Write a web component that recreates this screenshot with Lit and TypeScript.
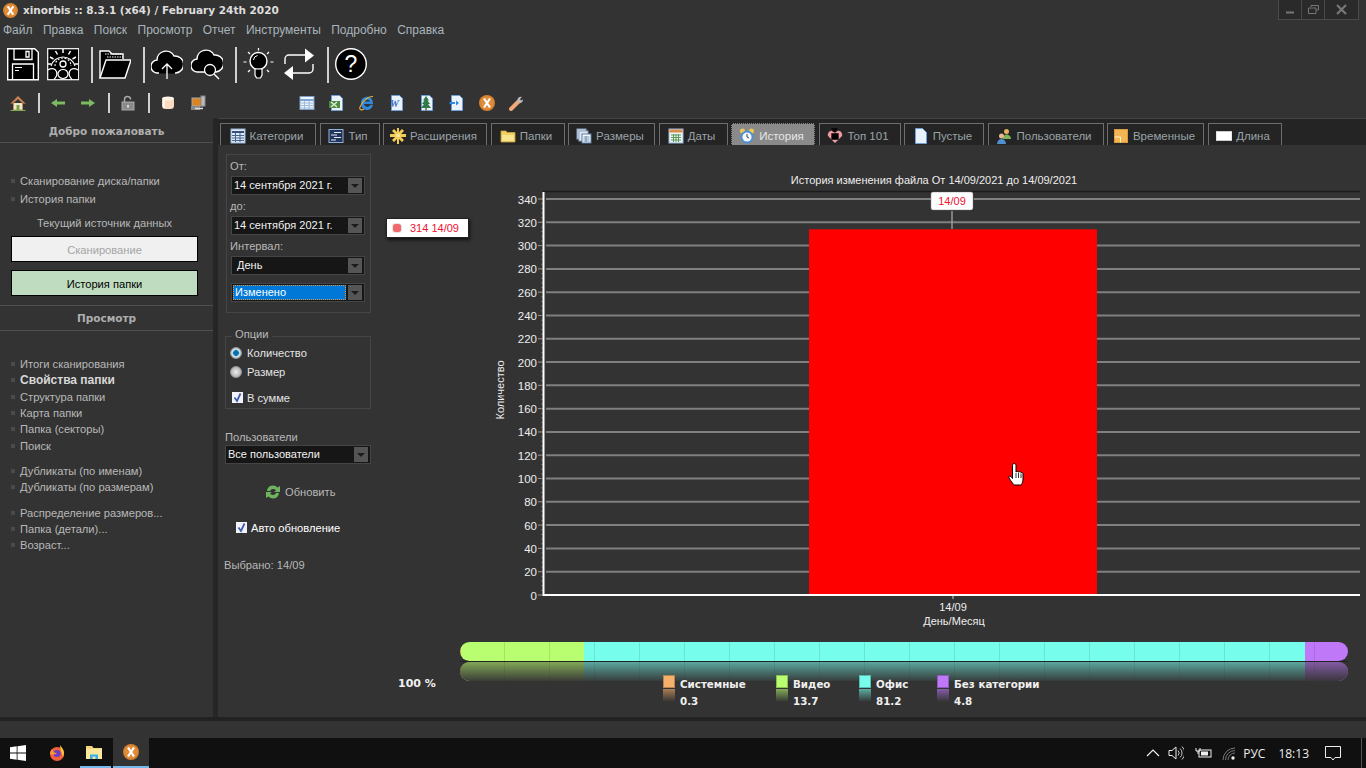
import { LitElement, html, css, svg } from "lit";
import { customElement } from "lit/decorators.js";

const xLogo = (s: number) => html`<svg class="ic" width=${s} height=${s} viewBox="0 0 16 16">
  <circle cx="8" cy="8" r="8" fill="#d4812f"/><circle cx="8" cy="8" r="6.4" fill="#e08c38"/>
  <path d="M5 3.5 11 12.5M11 3.5 5 12.5" stroke="#fff" stroke-width="2.2" fill="none"/></svg>`;

const big = (inner: unknown, w = 32) => html`<svg class="big" width=${w} height="34" viewBox="0 0 32 34">${inner}</svg>`;
const bigIcons = {
  save: big(svg`<path d="M.7 1.7h27l3.6 3.6v27.4H.7z" fill="#000" stroke="#fff" stroke-width="1.4"/>
    <path d="M7 2v10.5h18V2M19 4.5h3v5.5h-3zM5.5 32V17h21v15" fill="none" stroke="#fff" stroke-width="1.3"/>
    <path d="M8 20.5h7M8 23.5h4" stroke="#fff" stroke-width="1.2"/>`),
  gear: big(svg`<rect x=".7" y="1.7" width="31" height="31" fill="#000" stroke="#fff" stroke-width="1.2"/>
    <path d="M4 19A12.500 12.500 0 0 1 28 19" fill="none" stroke="#fff" stroke-width="1.100"/>
    <path d="M16 2v4M8.500 4l2 3.500M23.500 4l-2 3.500M3 10l3.500 2M29 10l-3.500 2M1 17h3.500M31 17h-3.500" stroke="#fff" stroke-width="1.500"/>
    <path d="M8 19a8 8 0 0 1 16 0" fill="none" stroke="#fff" stroke-width="1.100" stroke-dasharray="2 1.500"/>
    <circle cx="16" cy="17" r="3" fill="none" stroke="#fff" stroke-width="1.300"/>
    <path d="M1 23c3-2 7-2 8.500 1.500 1 3-.5 6-2.500 8M31 23c-3-2-7-2-8.500 1.500-1 3 .5 6 2.500 8M11 27a5 4.500 0 0 1 10 0 5 4.500 0 0 1-10 0" fill="none" stroke="#fff" stroke-width="1.200"/>`),
  folder: big(svg`<path d="M1 31V4h9l3 3h11v5" fill="#000" stroke="#fff" stroke-width="1.4"/>
    <path d="M6 7h17M8 10h16" stroke="#fff" stroke-dasharray="1.5 1" fill="none"/>
    <path d="M1 31 7 13h25l-6 18z" fill="#000" stroke="#fff" stroke-width="1.4"/>`),
  up: big(svg`<path d="M8 26H7a6.5 6.5 0 0 1-1-13 9 9 0 0 1 17-4 8.500 8.500 0 0 1 2 17h-1" fill="#000" stroke="#fff" stroke-width="1.4"/>
    <path d="M8 26h16" stroke="#000"/><path d="M16 32V17M11 22l5-5 5 5" fill="none" stroke="#fff" stroke-width="1.3"/>`),
  search: big(svg`<path d="M14 25H7a6.500 6.500 0 0 1-1-13 9 9 0 0 1 17-4 8.500 8.500 0 0 1 2 17h-1" fill="#000" stroke="#fff" stroke-width="1.4"/>
    <circle cx="19" cy="23" r="5.500" fill="#000" stroke="#fff" stroke-width="1.3"/><path d="M23 27l5 5" stroke="#fff" stroke-width="1.4"/>`),
  bulb: big(svg`<circle cx="15.500" cy="14" r="8.500" fill="#000" stroke="#fff" stroke-width="1.4"/>
    <path d="M12 22h7v6l-1.500 3h-4L12 28z" fill="#000" stroke="#fff" stroke-width="1.2"/>
    <path d="M10.500 13a5 5 0 0 1 4-4.500" fill="none" stroke="#fff"/>
    <path d="M15.500 1v2.500M5 5l2 2M26 5l-2 2M.5 15h3M27.500 15h3M5 25l2-2M26 25l-2-2" stroke="#fff" stroke-width="1.2"/>`),
  arrows: big(svg`<path d="M2 17v-5a4 4 0 0 1 4-4h20" fill="none" stroke="#fff" stroke-width="1.4"/><path d="M22 1.500l9 7-9 7z" fill="#fff"/>
    <path d="M30 17v5a4 4 0 0 1-4 4H6" fill="none" stroke="#fff" stroke-width="1.4"/><path d="M10 19l-9 7 9 7z" fill="#fff"/>`),
  help: big(svg`<circle cx="16" cy="17" r="15.300" fill="#000" stroke="#fff" stroke-width="1.4"/>
    <text x="16" y="25" text-anchor="middle" fill="#fff" font-family="Liberation Sans" font-size="23">?</text>`),
};

const sm = (inner: unknown, cls = "") => html`<svg class="ic ${cls}" width="16" height="16" viewBox="0 0 16 16">${inner}</svg>`;
const doc = svg`<path d="M2.500 .5h8l3 3v12h-11z" fill="#eaf3fc" stroke="#6f9fd8"/>`;
const gridSheet = svg`<rect x="1" y="1.500" width="14" height="13" fill="#eef5fb" stroke="#7c9ec8"/><path d="M1 5h14" stroke="#7ca6d6" stroke-width="2"/><path d="M2 8h12M2 10.500h12M2 13h12M5.500 6v8M10 6v8" stroke="#9cb9da"/>`;
const smIcons = {
  home: sm(svg`<path d="M3.500 8v7h9V8" fill="#f4e6c8" stroke="#b8986a"/><path d="M8 1 .5 8.500h2.500L8 4l5 4.500h2.500z" fill="#c9855a" stroke="#96603a" stroke-width=".6"/><rect x="6.500" y="10" width="3" height="5" fill="#7aa04c"/><path d="M.5 15.500h15" stroke="#7fae4e"/>`),
  left: sm(svg`<path d="M1 8l6-4v2.500h8v3H7V12z" fill="#7dbb62"/>`),
  right: sm(svg`<path d="M15 8l-6-4v2.500H1v3h8V12z" fill="#7dbb62"/>`),
  lock: sm(svg`<path d="M4.500 7V4.500a3 3 0 0 1 6 0" fill="none" stroke="#a8a8a8" stroke-width="1.500"/><rect x="2" y="7" width="12" height="8" fill="#8a8a8a" stroke="#aaa"/><rect x="7" y="10" width="2" height="2.500" fill="#ddd"/>`),
  cyl: sm(svg`<rect x="2" y="2" width="12" height="12" rx="3.500" fill="#fbdcc0"/><ellipse cx="8" cy="3.500" rx="6" ry="2" fill="#fff4e6"/><rect x="3" y="5" width="2" height="8" fill="#fff" opacity=".7"/>`),
  net: sm(svg`<rect x="2" y="3" width="11" height="8" fill="#dc8420" stroke="#aaa"/><rect x="11" y="1" width="4" height="10" fill="#bbb" stroke="#888"/><rect x="1" y="11" width="9" height="4" fill="#888"/><path d="M5 13.500h8" stroke="#ddd" stroke-width="1.500"/>`),
  sheet: sm(gridSheet),
  xls: sm(svg`${doc}<path d="M0 6h11v7H0z" fill="#4d8a3e"/><path d="M2 7l6 5M8 7l-6 5" stroke="#dff0d8" stroke-width="1.400"/>`),
  ie: sm(svg`<path d="M2 8a6 6 0 0 1 11.500-2.500L14 9H5a3.400 3.400 0 0 0 6.500.8h2.500A6 6 0 0 1 2 8z" fill="#2d8ae0"/><path d="M5 6.500a3.300 3.300 0 0 1 6 0z" fill="#333"/><path d="M14 1.500C11 1 4 4.500 1 12c-1 3 1.500 3.500 4 2" fill="none" stroke="#e4b13c" stroke-width="1.100"/>`),
  word: sm(svg`${doc}<text x="1" y="12" font-family="Liberation Serif" font-style="italic" font-weight="700" font-size="10" fill="#3a6fc4">W</text>`),
  tree: sm(svg`${doc}<path d="M7 1 10 5.500H8.500L11 9H9l3 4H2l3-4H3l2.500-3.500H4z" fill="#2f7a47"/><rect x="6.300" y="13" width="1.500" height="2.500" fill="#7a5a30"/>`),
  adoc: sm(svg`${doc}<path d="M0 8l3-2.500V7h3v2H3v1.500z" fill="#2d8ae0"/><path d="M10 8 7 5.500v5z" fill="#2d8ae0"/>`),
  x: xLogo(16),
  wrench: sm(svg`<path d="M2 14 9 7" stroke="#f0a878" stroke-width="4" stroke-linecap="round"/><path d="M8.500 6.500A3.500 3.500 0 0 1 13 2l-2 2 1 1.500 2-1A3.500 3.500 0 0 1 9.500 8z" fill="#b9b9b9"/>`),
  tCat: sm(svg`<rect x="1" y="1" width="14" height="14" fill="#dfe9f5" stroke="#9bb6d8"/><path d="M2 4h12" stroke="#36537e" stroke-width="2"/><path d="M2 7.500h12M2 10h12M2 12.500h12M5.500 5v9M10 5v9" stroke="#45658f"/>`),
  tType: sm(svg`<rect x="1" y="1.500" width="14" height="13" fill="#23365a" stroke="#8fb0dc"/><path d="M6 4.500h7M3 7h6M6 9.500h7M3 12h5" stroke="#e8eef8" stroke-width="1.200"/>`),
  tStar: sm(svg`<path d="M7 0h2v4l3-3 2 2-3 3h5v3h-5l3 3-2 2-3-3v5H7v-5l-3 3-2-2 3-3H0V6h5L2 3l2-2 3 3z" fill="#f2cc55"/><path d="M6 6h4v3H6z" fill="#f8e69a"/>`),
  tFolder: sm(svg`<path d="M1 3h5l1 1.500h8V14H1z" fill="#f0d060" stroke="#c6a548" stroke-width=".8"/><rect x="2" y="7" width="12" height="6" fill="#f8e68e"/>`),
  tSize: sm(svg`<rect x="1" y="1" width="9" height="10" fill="#cdd8e6" stroke="#8ea4c0"/><rect x="3" y="3" width="9" height="10" fill="#dfe7f1" stroke="#8ea4c0"/><rect x="6" y="6" width="9" height="9" fill="#f4f8fc" stroke="#597ba6"/><path d="M7.500 9h6M7.500 11h6M7.500 13h6M10 8v6" stroke="#5e7ea6" stroke-width=".8"/>`),
  tDate: sm(svg`<rect x="1" y="1" width="14" height="14" fill="#eef3f8" stroke="#9bb6d8"/><rect x="1.500" y="1.500" width="13" height="3" fill="#d98c4a"/><path d="M3 7h10M3 9.500h10M3 12h10M5.500 6v8M8 6v8M10.500 6v8" stroke="#5c9a5a"/>`),
  tClock: sm(svg`<circle cx="3.500" cy="3" r="2.500" fill="#f0c850"/><circle cx="12.500" cy="3" r="2.500" fill="#f0c850"/><circle cx="8" cy="9" r="6.500" fill="#4b90d6"/><circle cx="8" cy="9" r="4.600" fill="#f4f8fc"/><path d="M8 6v3l2 1" stroke="#345" fill="none"/>`),
  tTop: sm(svg`<path d="M8 15 1.500 8.500a3.500 3.500 0 0 1 0-4A3.500 3.500 0 0 1 8 5.500 3.500 3.500 0 0 1 14.500 4.500a3.500 3.500 0 0 1 0 4z" fill="#f09aa2"/><path d="M4.500 1h6M5.500 3h4M5 6h6v5H5z" stroke="#000" stroke-width="1.300" fill="#000"/>`),
  tPage: sm(svg`<path d="M2.500 .5h7l4 4v11h-11z" fill="#e8f2fc" stroke="#6f9fd8"/>`),
  tUsers: sm(svg`<circle cx="10.500" cy="3.500" r="2.500" fill="#e8b060"/><path d="M7 11c0-3 1.500-4.500 3.500-4.500S15 8 15 11z" fill="#7cb45a"/><circle cx="5.500" cy="8" r="2.500" fill="#e8b890"/><path d="M1 16c0-3 2-5 4.500-5S10 13 10 16z" fill="#4f8fd0"/>`),
  tTemp: sm(svg`<rect x="1.500" y="1.500" width="13" height="13" fill="#f2b654" stroke="#d89a3a"/><path d="M1.500 9h6v5.500" fill="none" stroke="#fff3cc"/>`),
  tLen: sm(svg`<rect x="0" y="3.500" width="16" height="9" fill="#fff" stroke="#ccc"/>`),
  refresh: sm(svg`<path d="M2 7A6 6 0 0 1 12.500 3.500L15 2v6h-6l2-1.500A3.500 3.500 0 0 0 5 7z" fill="#6eb45e"/><path d="M14 9A6 6 0 0 1 3.500 12.500L1 14V8h6L5 9.500A3.500 3.500 0 0 0 11 9z" fill="#6eb45e"/>`),
};

const TABS = [
  ["Категории", 96, "tCat"], ["Тип", 60, "tType"], ["Расширения", 104, "tStar"], ["Папки", 74, "tFolder"],
  ["Размеры", 87, "tSize"], ["Даты", 69, "tDate"], ["История", 84, "tClock"], ["Топ 101", 82, "tTop"],
  ["Пустые", 80, "tPage"], ["Пользователи", 116, "tUsers"], ["Временные", 97, "tTemp"], ["Длина", 74, "tLen"],
] as [string, number, keyof typeof smIcons][];

const SEGMENTS = [["#f5b06c", 0.1], ["#b9fd71", 13.9], ["#76fdec", 81.2], ["#be78f8", 4.8]] as [string, number][];
const LEGEND = [["Системные", "0.3", "#f5b06c", 113], ["Видео", "13.7", "#b9fd71", 83], ["Офис", "81.2", "#76fdec", 78], ["Без категории", "4.8", "#be78f8", 120]] as [string, string, string, number][];

const yAt = (v: number) => 595 - v * 1.1647;

@customElement("x-combo")
class XCombo extends LitElement {
  static properties = { label: {}, kind: {} };
  label = "";
  kind = "";
  static styles = css`
    :host { display: block; }
    .c { display: flex; align-items: center; height: 19px; box-sizing: border-box; background: #161616; border: 1px solid #454545; padding: 1px; color: #f2f2f2; font: 11px "Liberation Sans", sans-serif; }
    .t { flex: 1; height: 15px; line-height: 15px; padding-left: 1px; white-space: nowrap; }
    .pad .t { padding-left: 4px; }
    .sel .t { background: #0078d7; color: #fff; padding-left: 2px; margin-right: 2px; outline: 1px dotted #e8963c; outline-offset: -1px; }
    .b { width: 14px; height: 15px; background: #555; display: flex; align-items: center; justify-content: center; margin-right: 1px; }
    .a { width: 0; height: 0; border-left: 4px solid transparent; border-right: 4px solid transparent; border-top: 4px solid #1c1c1c; }
  `;
  render() {
    return html`<div class="c ${this.kind}"><div class="t">${this.label}</div><div class="b"><div class="a"></div></div></div>`;
  }
}

@customElement("app-root")
export class AppRoot extends LitElement {
  static styles = css`
    :host { display: block; width: 1366px; height: 768px; overflow: hidden; background: #333; color: #b8b8b8; font: 11.150px "Liberation Sans", sans-serif; }
    svg { display: block; flex: none; }
    .root { display: flex; flex-direction: column; height: 768px; }
    .title { height: 20px; display: flex; align-items: center; padding-left: 3px; gap: 5px; color: #ddd; font: bold 10.500px "DejaVu Sans", sans-serif; flex: none; }
    .winbtns { margin-left: auto; margin-right: 7px; display: flex; height: 19px; align-self: flex-start; border: 1px solid #4a4a4a; border-top: 0; background: #2a2a2a; }
    .winbtns div { width: 22px; display: flex; align-items: center; justify-content: center; border-left: 1px solid #4a4a4a; }
    .winbtns div:first-child { border-left: 0; }
    .winbtns div:last-child { width: 33px; }
    .menu { height: 20px; display: flex; align-items: center; padding-left: 3px; color: #a9b5bb; flex: none; font-size: 12px; }
    .menu span { margin-right: 10.400px; }
    .bigbar { height: 44px; padding: 4px 0 0 7px; box-sizing: border-box; display: flex; align-items: flex-start; flex: none; margin-top: 3px; }
    .big { margin-right: 8px; }
    .bsep { width: 2px; height: 36px; background: #d0d0d0; margin: 0 6px 0 4px; }
    .smallbar { height: 22px; display: flex; align-items: center; padding-left: 10px; flex: none; margin-top: 5px; }
    .ssep { width: 2px; height: 20px; background: #d0d0d0; margin: 0 10px 0 12px; }
    .g14 { margin-left: 14px; }
    .spacer { width: 93px; }
    .main { flex: 1; min-height: 0; display: flex; margin-top: 4px; border-bottom: 4px solid #222; }
    .side { width: 213px; flex: none; border-right: 5px solid #262626; }
    .sh { height: 24px; border-bottom: 1px solid #4f4f4f; text-align: center; color: #aeaeae; font: bold 10.500px/26px "DejaVu Sans", sans-serif; }
    .sh.second { border-top: 1px solid #4f4f4f; line-height: 25px; }
    .items { margin-top: 29px; }
    .items.second { margin-top: 25px; }
    .it { height: 18px; display: flex; align-items: center; padding-left: 11px; gap: 5px; white-space: nowrap; }
    .second .it { height: 16.300px; }
    .it::before { content: ""; width: 4px; height: 4px; background: #4a4a4a; }
    .it.strong { font-weight: 700; font-size: 12px; color: #d8d8d8; }
    .it.mt { margin-top: 9px; }
    .src { text-align: center; width: 209px; line-height: 16px; margin-top: 7px; }
    .btn { width: 187px; height: 26px; box-sizing: border-box; border: 1px solid #000; margin-left: 11px; display: flex; align-items: center; justify-content: center; padding-top: 1px; }
    .btn.off { background: #f0f0f0; color: #a5a5a5; margin-top: 5px; }
    .btn.on { background: #c0dcc0; color: #000; margin: 8px 0 9px 11px; }
    .content { flex: 1; min-width: 0; display: flex; flex-direction: column; }
    .tabs { height: 27px; box-sizing: border-box; background: #242424; border-top: 1px solid #454545; padding: 4px 0 0 2px; display: flex; gap: 3.500px; flex: none; }
    .tab { height: 22px; box-sizing: border-box; border: 1px solid #6e6e6e; border-bottom: 0; display: flex; align-items: center; justify-content: center; gap: 4px; color: #9aa3a8; white-space: nowrap; font-size: 11.500px; padding: 2px 3px 0 0; }
    .tab.active { background: #8a8a8a; color: #e6e6e6; border: 1px dotted #222; border-bottom: 0; }
    .body { flex: 1; min-height: 0; display: flex; }
    .form { width: 168px; flex: none; box-sizing: border-box; padding: 9px 0 0 8px; }
    .box { width: 145px; height: 159px; box-sizing: border-box; border: 1px solid #454545; padding: 4px 0 0 4px; }
    .box x-combo { width: 134px; margin-top: 3px; }
    .box x-combo.c4 { margin-top: 8px; }
    .lb { height: 14px; line-height: 14px; margin-top: 4px; margin-left: -1px; }
    .lb.first { margin-top: 0; }
    fieldset { width: 146px; height: 80px; box-sizing: border-box; margin: 16px 0 0 -1px; padding: 0 4px; border: 1px solid #454545; min-width: 0; }
    legend { margin-left: 2px; padding: 0 3px; line-height: 10px; height: 14px; }
    .opt { height: 19px; display: flex; align-items: center; gap: 5px; color: #e4e4e4; }
    .opt.ck { margin-top: 7px; padding-left: 2px; gap: 4px; }
    .radio { width: 12px; height: 12px; border-radius: 50%; box-sizing: border-box; border: 1px solid #999; background: radial-gradient(circle, #eee, #9c9c9c); flex: none; }
    .radio.on { background: radial-gradient(circle, #0a6fae 0 2.500px, #7fc0e6 3px, #dfe8ee 4px, #8a8a8a 6px); }
    .check { width: 11px; height: 11px; background: #f2f2f8; flex: none; }
    .ulabel { margin: 21px 0 1px -1px; height: 14px; line-height: 14px; }
    .ucombo { width: 146px; margin-left: -1px; }
    .refresh { margin: 20px 0 0 39px; height: 16px; display: flex; align-items: center; gap: 4px; }
    .auto { margin: 21px 0 0 10px; height: 13px; display: flex; align-items: center; gap: 4px; color: #fff; }
    .picked { margin: 24px 0 0 -2px; line-height: 14px; }
    .right { flex: 1; min-width: 0; position: relative; }
    .tip { position: absolute; left: 0; top: 73px; width: 83px; height: 20px; box-sizing: border-box; background: #fff; border: 1px solid #222; box-shadow: 1px 2px 3px #111; display: flex; align-items: center; color: #f01030; padding-left: 6px; gap: 9px; font-size: 11px; }
    .tip i { width: 8px; height: 8px; border-radius: 2.500px; background: #f0686c; box-shadow: 0 0 0 1px #e6e6e6; }
    .stack { margin: 7px 0 0 74px; width: 888px; position: relative; }
    .bar { height: 19px; display: flex; border-radius: 10px; overflow: hidden; position: relative; }
    .bar div { height: 100%; }
    .lines { position: absolute; inset: 0; background: repeating-linear-gradient(90deg, transparent 0 44px, rgba(0,0,0,.1) 44px 45px); }
    .bline { height: 1px; background: #222; }
    .refl { height: 19px; display: flex; border-radius: 10px; overflow: hidden; position: relative; }
    .refl div { height: 100%; }
    .fade { position: absolute; inset: 0; background: linear-gradient(rgba(51,51,51,.42), rgba(51,51,51,.95)); }
    .legend { display: flex; margin: -5px 0 0 12px; position: relative; height: 36px; color: #f0f0f0; font: bold 10.300px "DejaVu Sans", sans-serif; }
    .pct { width: 265px; line-height: 16px; font-size: 11px; }
    .li { display: flex; gap: 5px; }
    .sw { width: 12px; margin-top: -1px; }
    .sw b { display: block; height: 13px; box-sizing: border-box; border: 1px solid rgba(0,0,0,.25); }
    .sw u { display: block; height: 13px; margin-top: 1px; opacity: .6; mask-image: linear-gradient(#000, transparent); }
    .li p { margin: 0; line-height: 16px; white-space: nowrap; }
    .li p + p { margin-top: 1px; }
    .status { height: 17px; flex: none; }
    .task { height: 30px; flex: none; background: #101010; display: flex; align-items: center; color: #eee; position: relative; }
    .tb { height: 30px; display: flex; align-items: center; justify-content: center; box-sizing: border-box; flex: none; }
    .tb.win { width: 36px; }
    .tb.fox { width: 41px; }
    .tb.dir { width: 31px; border-bottom: 2px solid #76b9ed; margin-left: 3px; padding-right: 3px; }
    .tb.xin { width: 36px; background: #333; border-bottom: 2px solid #76b9ed; margin-left: 2px; }
    .tray { margin-left: auto; display: flex; align-items: center; height: 30px; font: 12px "Open Sans", "Liberation Sans", sans-serif; }
    .caret { margin-right: 8px; }
    .spk { margin-right: 11px; }
    .bat { margin-right: 10px; }
    .tray .lang { margin: 0 13px 0 7px; }
    .tray .time { margin-right: 16px; }
    .endline { width: 1px; height: 30px; background: #555; margin: 0 4px 0 20px; }
  `;

  render() {
    const menu = ["Файл", "Правка", "Поиск", "Просмотр", "Отчет", "Инструменты", "Подробно", "Справка"];
    const ticks = Array.from({ length: 18 }, (_, i) => i * 20);
    const minor = Array.from({ length: 86 }, (_, i) => i * 4);
    return html`<div class="root">
      <div class="title">${xLogo(15)}<span>xinorbis :: 8.3.1 (x64) / February 24th 2020</span>
        <div class="winbtns">
          <div><svg width="8" height="8" viewBox="0 0 8 8"><path d="M0 6.500h8" stroke="#777" stroke-width="2"/></svg></div>
          <div><svg width="11" height="9" viewBox="0 0 11 9"><path d="M3 2V.5h7.500v4.500H8.500M.5 3h7.500v5.500H.5z" fill="none" stroke="#777"/></svg></div>
          <div><svg width="11" height="11" viewBox="0 0 11 11"><path d="M1 1l9 9M10 1l-9 9" stroke="#777" stroke-width="2.200"/></svg></div>
        </div>
      </div>
      <div class="menu">${menu.map((m) => html`<span>${m}</span>`)}</div>
      <div class="bigbar">
        ${bigIcons.save}${bigIcons.gear}<div class="bsep"></div>${bigIcons.folder}<div class="bsep"></div>
        ${bigIcons.up}${bigIcons.search}<div class="bsep"></div>${bigIcons.bulb}${bigIcons.arrows}<div class="bsep"></div>${bigIcons.help}
      </div>
      <div class="smallbar">
        ${smIcons.home}<div class="ssep"></div>${smIcons.left}<span class="g14"></span>${smIcons.right}<div class="ssep"></div>${smIcons.lock}<div class="ssep"></div>${smIcons.cyl}<span class="g14"></span>${smIcons.net}
        <span class="spacer"></span>
        ${[smIcons.sheet, smIcons.xls, smIcons.ie, smIcons.word, smIcons.tree, smIcons.adoc, smIcons.x, smIcons.wrench].map((ic, i) => html`${i ? html`<span class="g14"></span>` : ""}${ic}`)}
      </div>
      <div class="main">
        <div class="side">
          <div class="sh">Добро пожаловать</div>
          <div class="items"><div class="it">Сканирование диска/папки</div><div class="it">История папки</div></div>
          <div class="src">Текущий источник данных</div>
          <div class="btn off">Сканирование</div>
          <div class="btn on">История папки</div>
          <div class="sh second">Просмотр</div>
          <div class="items second">
            <div class="it">Итоги сканирования</div><div class="it strong">Свойства папки</div><div class="it">Структура папки</div>
            <div class="it">Карта папки</div><div class="it">Папка (секторы)</div><div class="it">Поиск</div>
            <div class="it mt">Дубликаты (по именам)</div><div class="it">Дубликаты (по размерам)</div>
            <div class="it mt">Распределение размеров...</div><div class="it">Папка (детали)...</div><div class="it">Возраст...</div>
          </div>
        </div>
        <div class="content">
          <div class="tabs">
            ${TABS.map(([t, w, ic]) => html`<div class="tab ${t === "История" ? "active" : ""}" style="width:${w}px">${smIcons[ic]}<span>${t}</span></div>`)}
          </div>
          <div class="body">
            <div class="form">
              <div class="box">
                <div class="lb first">От:</div><x-combo label="14 сентября 2021 г."></x-combo>
                <div class="lb">до:</div><x-combo label="14 сентября 2021 г."></x-combo>
                <div class="lb">Интервал:</div><x-combo label="День" kind="pad"></x-combo>
                <x-combo class="c4" label="Изменено" kind="sel"></x-combo>
              </div>
              <fieldset><legend>Опции</legend>
                <div class="opt"><span class="radio on"></span>Количество</div>
                <div class="opt"><span class="radio"></span>Размер</div>
                <div class="opt ck"><span class="check"><svg width="11" height="11" viewBox="0 0 11 11"><path d="M2.500 5.500 5 9l3.500-7.500" fill="none" stroke="#3f5fae" stroke-width="1.800"/></svg></span>В сумме</div>
              </fieldset>
              <div class="ulabel">Пользователи</div>
              <x-combo class="ucombo" label="Все пользователи"></x-combo>
              <div class="refresh">${smIcons.refresh}<span>Обновить</span></div>
              <div class="auto"><span class="check"><svg width="11" height="11" viewBox="0 0 11 11"><path d="M2.500 5.500 5 9l3.500-7.500" fill="none" stroke="#3f5fae" stroke-width="1.800"/></svg></span>Авто обновление</div>
              <div class="picked">Выбрано: 14/09</div>
            </div>
            <div class="right">
              <svg width="980" height="490" viewBox="386 145 980 490" font-family="Liberation Sans" font-size="11">
                <text x="934" y="184" text-anchor="middle" fill="#eee">История изменения файла От 14/09/2021 до 14/09/2021</text>
                <path d="M543 191.500H1360" stroke="#1c1c1c" stroke-width="1.500"/>
                ${ticks.map((v) => svg`<path d="M546 ${yAt(v)}H1360" stroke="#808080" stroke-width="2"/>
                  <path d="M538 ${yAt(v)}H543" stroke="#999"/>
                  <text x="537" y="${yAt(v) + 4.5}" text-anchor="end" fill="#eee" font-size="11.500">${v}</text>`)}
                ${minor.map((v) => svg`<path d="M541 ${yAt(v)}H543" stroke="#666"/>`)}
                <rect x="809" y="229.300" width="288" height="365.700" fill="#f00"/>
                <path d="M543.500 192V596M543 595H1360" stroke="#fff" stroke-width="2"/>
                <path d="M952 211V229" stroke="#999" stroke-width="1.500"/>
                <rect x="932" y="193" width="42" height="18" rx="2" fill="#222" opacity=".6"/>
                <rect x="931" y="192" width="42" height="18" rx="2" fill="#fff" stroke="#888" stroke-width=".5"/>
                <text x="952" y="205" text-anchor="middle" fill="#f01030">14/09</text>
                <path d="M953 596v3" stroke="#ccc"/>
                <text x="953" y="611" text-anchor="middle" fill="#eee">14/09</text>
                <text x="954" y="625" text-anchor="middle" fill="#eee">День/Месяц</text>
                <text transform="translate(504 390) rotate(-90)" text-anchor="middle" fill="#eee">Количество</text>
                <path d="M1014 463.500c1.500 0 2 1 2 2v6.500c1-.8 2-.8 2.500 0 1-.5 2-.5 2.500.500 1-.3 2 0 2 1.500v5c0 3-1.500 6-2 6h-6.500c-1 0-5-6-5.500-7.500-.5-1.500 1-2 2-1l1.500 2V465.500c0-1.200.8-2 1.500-2z" fill="#fff" stroke="#000"/>
                <path d="M1016 473v5M1018.500 473v5M1021 473.500v4.500" stroke="#000" stroke-width=".8"/>
              </svg>
              <div class="tip"><i></i><span>314 14/09</span></div>
              <div class="stack">
                <div class="bar">${SEGMENTS.map(([c, p]) => html`<div style="width:${p}%;background:${c}"></div>`)}<span class="lines"></span></div>
                <div class="bline"></div>
                <div class="refl">${SEGMENTS.map(([c, p]) => html`<div style="width:${p}%;background:${c}"></div>`)}<span class="lines"></span><span class="fade"></span></div>
              </div>
              <div class="legend">
                <div class="pct">100 %</div>
                ${LEGEND.map(([n, v, c, w]) => html`<div class="li" style="width:${w}px"><div class="sw"><b style="background:${c}"></b><u style="background:${c}"></u></div><div><p>${n}</p><p>${v}</p></div></div>`)}
              </div>
            </div>
          </div>
        </div>
      </div>
      <div class="status"></div>
      <div class="task">
        <div class="tb win"><svg width="16" height="16" viewBox="0 0 16 16"><path d="M0 2.300 6.700 1.300v6.300H0zM7.500 1.200 16 0v7.600H7.500zM0 8.400h6.700v6.300L0 13.700zM7.500 8.400H16V16l-8.500-1.200z" fill="#fff"/></svg></div>
        <div class="tb fox"><svg width="16" height="16" viewBox="0 0 16 16"><circle cx="8" cy="9" r="7" fill="#f2603a"/><path d="M11 0c1 2 4 4 4 8 0 1-.5 3-1 4-1-4-3-7-3-12z" fill="#fcc33f"/><circle cx="8" cy="8.500" r="3.600" fill="#6b3dc4"/><path d="M1 9c0-2 1-4 2-5 1 3 2 4 5 4-2 2-5 2-7 1z" fill="#f89a2e"/></svg></div>
        <div class="tb dir"><svg width="16" height="16" viewBox="0 0 16 16"><path d="M0 2h6l1.500 2H16v11H0z" fill="#f6d77a"/><rect x="0" y="5" width="16" height="10" fill="#fde79d"/><path d="M4 15v-4.500h8V15h-2.500v-2.500h-3V15z" fill="#38b0ea"/></svg></div>
        <div class="tb xin">${xLogo(16)}</div>
        <div class="tray">
          <svg class="caret" width="14" height="8" viewBox="0 0 14 8"><path d="M1 7l6-6 6 6" fill="none" stroke="#eee" stroke-width="1.200"/></svg>
          <svg class="spk" width="16" height="14" viewBox="0 0 16 14"><path d="M1 4.500h3L8 1v12L4 9.500H1z" fill="none" stroke="#eee"/><path d="M10 4.500a3.500 3.500 0 0 1 0 5M12 2.500a6 6 0 0 1 0 9M14 .5a9 9 0 0 1 0 13" fill="none" stroke="#ddd" stroke-width=".9"/></svg>
          <svg class="bat" width="17" height="12" viewBox="0 0 17 12"><path d="M1 1v3h4V1M3 4v3" stroke="#eee" fill="none"/><rect x="4" y="3" width="12" height="7" fill="none" stroke="#eee"/><rect x="6" y="4.500" width="7" height="4" fill="#eee"/></svg>
          <svg width="14" height="13" viewBox="0 0 14 13"><path d="M1 13A12 12 0 0 1 13 1M3.500 13A9.500 9.500 0 0 1 13 3.500M6 13a7 7 0 0 1 7-7" fill="none" stroke="#777"/><circle cx="11" cy="11" r="1.700" fill="#eee"/></svg>
          <span class="lang">РУС</span><span class="time">18:13</span>
          <svg width="16" height="16" viewBox="0 0 16 16"><path d="M.5 1.500h15v11H10L8 15l-2-2.500H.5z" fill="none" stroke="#eee"/></svg>
          <div class="endline"></div>
        </div>
      </div>
    </div>`;
  }
}
void XCombo;
